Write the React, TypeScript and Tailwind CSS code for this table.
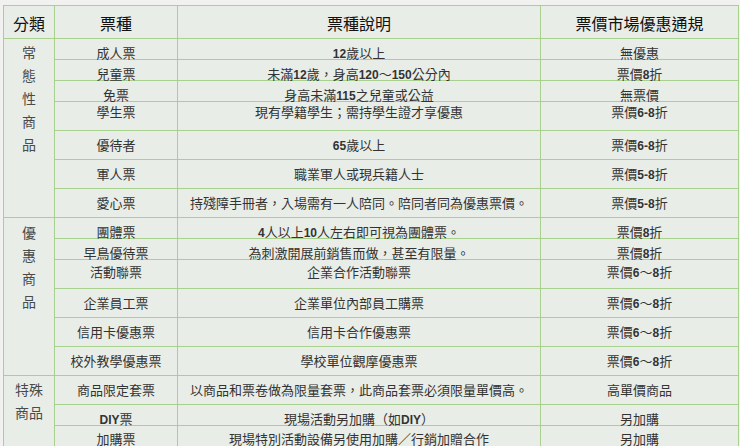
import React from "react";

type Row = { h: "s" | "t"; shift: string; name: string; desc: string; price: string };
type Group = { span: string; pad: string; label: string[]; rows: Row[] };

const groups: Group[] = [
  {
    span: "row-span-7",
    pad: "pt-[3px]",
    label: ["常", "態", "性", "商", "品"],
    rows: [
      { h: "s", shift: "pt-[8px]", name: "成人票", desc: "12歲以上", price: "無優惠" },
      { h: "s", shift: "pt-[8px]", name: "兒童票", desc: "未滿12歲，身高120～150公分內", price: "票價8折" },
      { h: "s", shift: "pt-[8px]", name: "免票", desc: "身高未滿115之兒童或公益", price: "無票價" },
      { h: "t", shift: "pb-[7px]", name: "學生票", desc: "現有學籍學生；需持學生證才享優惠", price: "票價6-8折" },
      { h: "t", shift: "", name: "優待者", desc: "65歲以上", price: "票價6-8折" },
      { h: "t", shift: "", name: "軍人票", desc: "職業軍人或現兵籍人士", price: "票價5-8折" },
      { h: "t", shift: "", name: "愛心票", desc: "持殘障手冊者，入場需有一人陪同。陪同者同為優惠票價。", price: "票價5-8折" },
    ],
  },
  {
    span: "row-span-6",
    pad: "pt-[4px]",
    label: ["優", "惠", "商", "品"],
    rows: [
      { h: "s", shift: "pt-[8px]", name: "團體票", desc: "4人以上10人左右即可視為團體票。", price: "票價8折" },
      { h: "s", shift: "pt-[8px]", name: "早鳥優待票", desc: "為刺激開展前銷售而做，甚至有限量。", price: "票價8折" },
      { h: "t", shift: "pb-[3px]", name: "活動聯票", desc: "企業合作活動聯票", price: "票價6～8折" },
      { h: "t", shift: "", name: "企業員工票", desc: "企業單位內部員工購票", price: "票價6～8折" },
      { h: "t", shift: "", name: "信用卡優惠票", desc: "信用卡合作優惠票", price: "票價6～8折" },
      { h: "t", shift: "", name: "校外教學優惠票", desc: "學校單位觀摩優惠票", price: "票價6～8折" },
    ],
  },
  {
    span: "row-span-3",
    pad: "pt-[3px]",
    label: ["特殊", "商品"],
    rows: [
      { h: "t", shift: "", name: "商品限定套票", desc: "以商品和票卷做為限量套票，此商品套票必須限量單價高。", price: "高單價商品" },
      { h: "s", shift: "pt-[8px]", name: "DIY票", desc: "現場活動另加購（如DIY）", price: "另加購" },
      { h: "s", shift: "pt-[5px]", name: "加購票", desc: "現場特別活動設備另使用加購／行銷加贈合作", price: "另加購" },
    ],
  },
];

function Txt({ text }: { text: string }) {
  const parts = text.split(/([A-Za-z0-9\-]+)/);
  return (
    <span className="whitespace-nowrap">
      {parts.map((p, i) =>
        /^[A-Za-z0-9\-]+$/.test(p) ? (
          <span key={i} className="font-bold text-[12px]">
            {p}
          </span>
        ) : (
          <span key={i}>{p}</span>
        )
      )}
    </span>
  );
}

const cell = "border-r border-b border-[#a9d18e] bg-[#e9ede7] flex justify-center items-center leading-none";

export default function App() {
  return (
    <div className="w-[740px] h-[446px] overflow-hidden bg-[#f1f1f0] pl-[3px] pt-[5px] font-['Liberation_Sans','Noto_Sans_CJK_TC',sans-serif]">
      <div className="w-[736px] grid grid-cols-[51px_123px_363px_198px] grid-rows-[33px_21px_21px_21px_29px_29px_29px_29px_21px_21px_29px_29px_29px_29px_29px_21px_22px] border-l border-t border-[#a9d18e] text-[13px] text-[#333]">
        <div className={`${cell} pt-[6px] text-[16px] text-[#111]`}>分類</div>
        <div className={`${cell} pt-[6px] text-[16px] text-[#111]`}>票種</div>
        <div className={`${cell} pt-[6px] text-[16px] text-[#111]`}>票種說明</div>
        <div className={`${cell} pt-[6px] text-[16px] text-[#111]`}>票價市場優惠通規</div>
        {groups.map((g, gi) => (
          <React.Fragment key={gi}>
            <div
              className={`${g.span} ${g.pad} border-r border-b border-[#a9d18e] bg-[#e9ede7] flex flex-col items-center text-[14px] leading-[23px] text-[#4a4a4a]`}
            >
              {g.label.map((l, li) => (
                <span key={li}>{l}</span>
              ))}
            </div>
            {g.rows.map((r, ri) => (
              <React.Fragment key={ri}>
                <div className={`${cell} ${r.shift}`}>
                  <Txt text={r.name} />
                </div>
                <div className={`${cell} ${r.shift}`}>
                  <Txt text={r.desc} />
                </div>
                <div className={`${cell} ${r.shift}`}>
                  <Txt text={r.price} />
                </div>
              </React.Fragment>
            ))}
          </React.Fragment>
        ))}
      </div>
    </div>
  );
}
